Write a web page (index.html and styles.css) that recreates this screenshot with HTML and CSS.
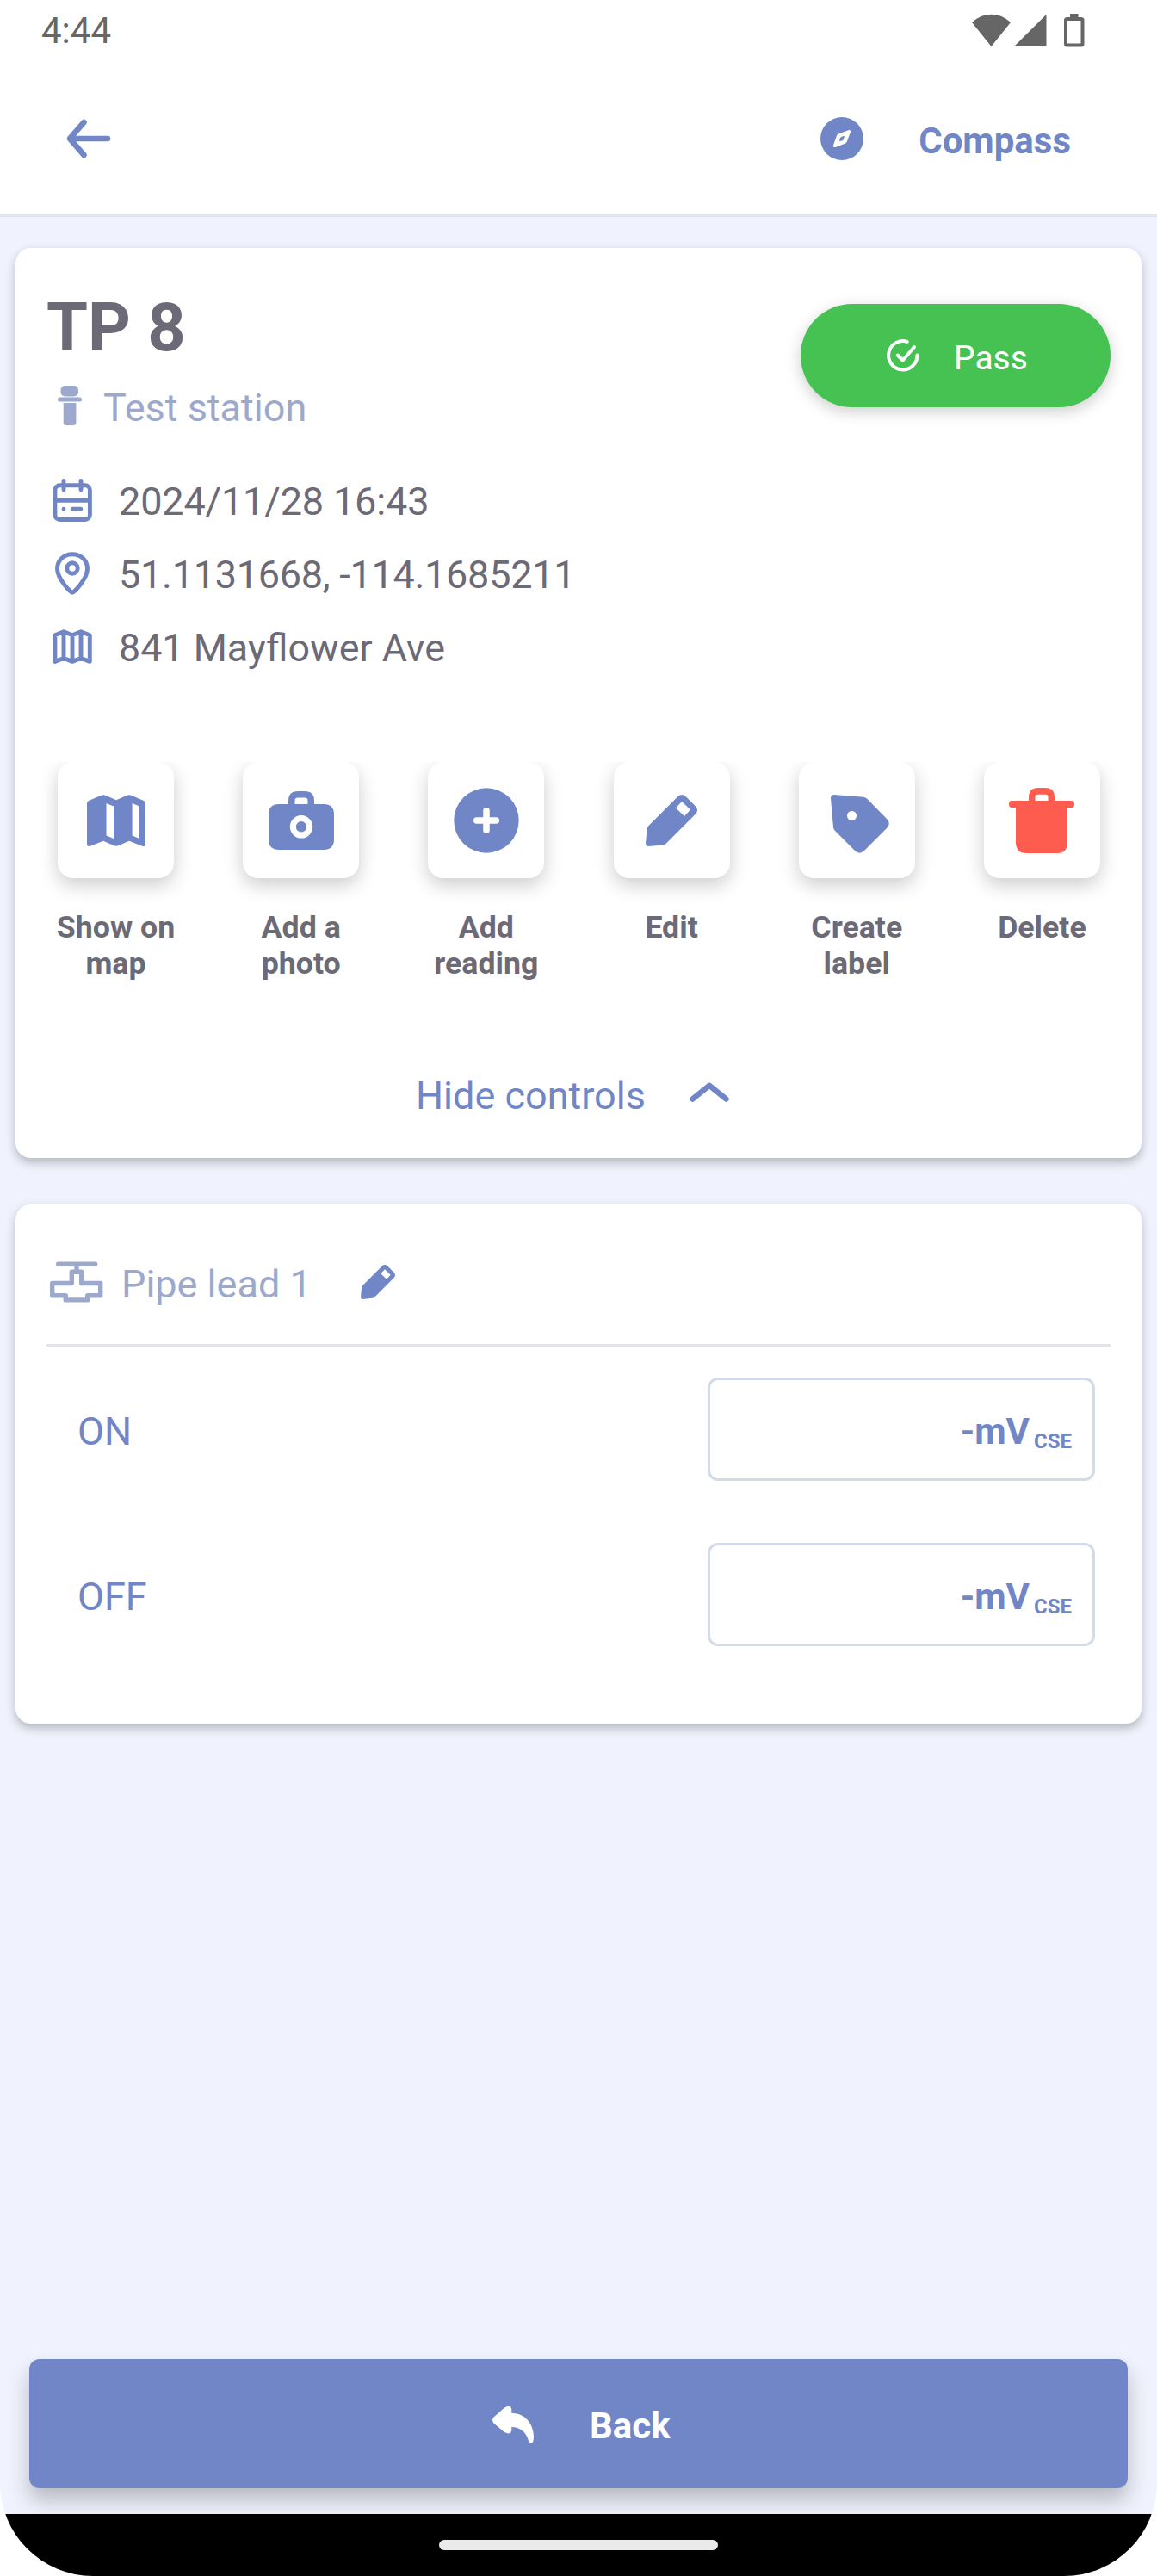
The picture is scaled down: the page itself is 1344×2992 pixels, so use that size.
FILE: index.html
```html
<!DOCTYPE html>
<html lang="en">
<head>
<meta charset="utf-8">
<title>TP 8</title>
<link rel="stylesheet" href="styles.css">
</head>
<body>
<div class="screen">
  <div class="status">
    <span>4:44</span>
    <div class="status-icons">
      <svg width="45" height="38" viewBox="0 0 45 38"><path d="M0 10Q10 .7 22.5.7T45 10L22.5 38Z"/></svg>
      <svg class="signal" width="38" height="38" viewBox="0 0 38 38"><path d="M0 38L37.5.7V38Z"/></svg>
      <svg class="battery" width="24" height="39" viewBox="0 0 24 39"><path fill-rule="evenodd" d="M7 0h9.5v4H20q3.500 0 3.500 3.500V35q0 3.500-3.500 3.500H3.500Q0 38.500 0 35V7.500Q0 4 3.500 4H7ZM4 8V34.500H19.500V8Z"/></svg>
    </div>
  </div>

  <header class="topbar">
    <svg class="line" width="52" height="46" viewBox="0 0 52 46" stroke-width="6.500"><path d="M20.500 4L4 23L20.500 42M5 23H48"/></svg>
    <div class="compass">
      <svg width="50" height="50" viewBox="0 0 50 50"><circle cx="25" cy="25" r="25"/><path fill="#fff" d="M21.500 19.200L32.500 15.200Q35.800 14.500 35 17.500L30.800 28.500Q30 30.300 28.500 30.800L17.500 35Q14.200 35.500 15 32.500L19 21.500Q19.700 19.800 21.500 19.200Z"/><path d="M22 28L23 24Q25 22 28 22L27 25.800Q26 28 22 28Z"/></svg>
      <span>Compass</span>
    </div>
  </header>

  <main>
    <section class="card point">
      <div class="point-head">
        <div>
          <h1>TP 8</h1>
          <div class="kind">
            <svg width="60" height="48" viewBox="0 0 60 48"><rect x="16.500" y="1" width="20.500" height="12.500" rx="5"/><rect x="13" y="14.500" width="28" height="5" rx="2.500"/><path d="M19.700 21H34.400V43.500Q34.400 47 31 47H23Q19.700 47 19.700 43.500Z"/></svg>
            <span>Test station</span>
          </div>
        </div>
        <div class="pass">
          <svg class="line" width="38" height="38" viewBox="0 0 38 38" stroke-width="4"><path d="M23.800 2.800A16.700 16.700 0 1 0 35.500 18.500M12.700 18.500L18.700 24.500L32 9"/></svg>
          <span>Pass</span>
        </div>
      </div>

      <div class="meta">
        <div class="meta-row">
          <svg class="line" width="60" height="52" viewBox="0 0 60 52" stroke-width="4.900"><rect x="9.900" y="8.800" width="40.500" height="39.700" rx="5.500"/><path d="M10 26.200H50M20 3.500V13.700M40 3.500V13.700M30.200 36.200H39.800M20 36.200V36.210"/></svg>
          <span class="date">2024/11/28 16:43</span>
        </div>
        <div class="meta-row">
          <svg class="line" width="60" height="52" viewBox="0 0 60 52" stroke-width="4.900"><path d="M30 48.300C28 48.300 12.500 32 12.500 20.800C12.500 11 20 3.700 30 3.700S47.500 11 47.500 20.800C47.500 32 32 48.300 30 48.300Z"/><circle cx="30" cy="20" r="6.200"/></svg>
          <span class="coords">51.1131668, -114.1685211</span>
        </div>
        <div class="meta-row">
          <svg class="line" width="60" height="52" viewBox="0 0 60 52" stroke-width="4.900"><path d="M9.900 12.800L20 8.700L30 12.800L40 8.700L50.300 12.800V43.400L40 39.500L30 43.400L20 39.500L9.900 43.400ZM20 9V39M30 13V43M40 9V39"/></svg>
          <span class="address">841 Mayflower Ave</span>
        </div>
      </div>

      <div class="actions">
        <div class="action">
          <div class="tile"><svg width="68" height="60" viewBox="0 0 68 60"><path fill-rule="evenodd" d="M2 7L16 1Q19 -.5 22 1L34 6.300L46 1Q49 -.5 52 1L66 7Q68 8 68 10V56.500Q68 61.500 63.500 59.500L49 53.700L37 59Q34 60.500 31 59L19 53.700L4.500 59.500Q0 61.500 0 56.500V10Q0 8 2 7ZM22.500 10V47.500L31 51V13.500ZM52.600 10V47.500L61 51V13.500Z"/></svg></div>
          <span>Show on map</span>
        </div>
        <div class="action">
          <div class="tile"><svg width="76" height="68" viewBox="0 0 76 68"><path fill-rule="evenodd" d="M23 15V11Q23 0 34 0H42Q53 0 53 11V15H64Q76 15 76 27V56Q76 68 64 68H12Q0 68 0 56V27Q0 15 12 15ZM30.500 15H45.500V11Q45.500 7.500 42.500 7.500H33.500Q30.500 7.500 30.500 11Z"/><circle cx="38" cy="41.300" r="9.700" fill="none" stroke="#fff" stroke-width="7"/></svg></div>
          <span>Add a photo</span>
        </div>
        <div class="action">
          <div class="tile"><svg width="76" height="76" viewBox="0 0 76 76"><circle cx="38" cy="38" r="37.700"/><path d="M26.700 38H49.300M38 26.700V49.300" stroke="#fff" stroke-width="7.500" stroke-linecap="round"/></svg></div>
          <span>Add reading</span>
        </div>
        <div class="action">
          <div class="tile"><svg width="60" height="60" viewBox="0 0 60 60"><path fill-rule="evenodd" d="M3.500 36L37.500 2Q42 -2 46.500 2L58 13.500Q62 18 58 22.500L24 56.500Q22.500 58 20.500 58.300L4 60Q0 60 0 56L1.700 39.500Q2 37.500 3.500 36ZM35 15.500L42 8L52 17.500L45 25Z"/></svg></div>
          <span>Edit</span>
        </div>
        <div class="action">
          <div class="tile tag"><svg width="68" height="68" viewBox="0 0 68 68"><path fill-rule="evenodd" d="M4 0L38 2.800Q40.500 3 42.500 5L65.500 28.500Q70 33.500 65.500 38.500L38.500 65.500Q33.500 69.800 28.500 65.500L5 42Q3.200 40.200 3 38L0 4Q0 0 4 0ZM24.500 19A5.500 5.500 0 1 0 24.510 19Z"/></svg></div>
          <span>Create label</span>
        </div>
        <div class="action">
          <div class="tile danger"><svg width="76" height="76" viewBox="0 0 76 76"><path fill-rule="evenodd" d="M23 15V11Q23 0 34 0H42Q53 0 53 11V15H73Q76 15 76 19T73 23H68V63Q68 76 56 76H20Q8 76 8 63V23H3Q0 23 0 19T3 15ZM30.500 15H45.500V11Q45.500 7.700 42.500 7.700H33.500Q30.500 7.700 30.500 11Z"/></svg></div>
          <span>Delete</span>
        </div>
      </div>

      <div class="toggle">
        <span>Hide controls</span>
        <svg class="line" width="46" height="24" viewBox="0 0 46 24" stroke-width="6.500"><path d="M3.500 19.500L23 3.800L42.500 19.500"/></svg>
      </div>
    </section>

    <section class="card lead">
      <div class="lead-head">
        <svg class="line valve" width="62" height="48" viewBox="0 0 62 48" stroke-width="5.400"><path d="M9.700 3.200H52.700M31 3.200V12M25.300 12.200H36.700V25.500H58.700V39.800H43.700V44.900H18.300V39.800H2.700V25.500H25.300Z"/></svg>
        <span>Pipe lead 1</span>
        <svg class="pen" width="40" height="40" viewBox="0 0 60 60"><path fill-rule="evenodd" d="M3.500 36L37.500 2Q42 -2 46.500 2L58 13.500Q62 18 58 22.500L24 56.500Q22.500 58 20.500 58.300L4 60Q0 60 0 56L1.700 39.500Q2 37.500 3.500 36ZM35 15.500L42 8L52 17.500L45 25Z"/></svg>
      </div>
      <div class="readings">
        <div class="reading"><span>ON</span><div class="field"><b>-mV</b><small>CSE</small></div></div>
        <div class="reading"><span>OFF</span><div class="field"><b>-mV</b><small>CSE</small></div></div>
      </div>
    </section>
  </main>

  <div class="back">
    <svg width="48" height="43" viewBox="0 0 48 43"><path d="M2 12L14 1.500Q22 -3 22.300 4V7.700C38 8 48 20 48 36Q47.500 43 45 43Q42.500 43 41 37C38 29 32 24.500 22.300 24V27Q22 34 14 30L2 20Q-2 16 2 12Z"/></svg>
    <span>Back</span>
  </div>
  <div class="nav"><div class="handle"></div></div>
</div>
</body>
</html>
```
FILE: styles.css
```css
* { box-sizing: border-box; }
body { margin: 0; background: #fff; font-family: Roboto, sans-serif; color: #6b6a76; }
svg { display: block; flex: none; fill: currentColor; overflow: visible; }
svg.line { fill: none; stroke: currentColor; stroke-linecap: round; stroke-linejoin: round; }
span { white-space: nowrap; }

.screen { display: flex; flex-direction: column; width: 1344px; height: 2992px; overflow: hidden; background: #f0f3fd; border-radius: 0 0 108px 108px; }

.status { display: flex; align-items: center; justify-content: space-between; height: 72px; padding: 0 84px 0 48px; background: #fff; color: #666; font-size: 42px; line-height: 72px; }
.status-icons { display: flex; align-items: center; margin-top: -2px; }
.signal { margin-left: 4px; }
.battery { margin-left: 20px; }

.topbar { display: flex; align-items: center; justify-content: space-between; height: 180px; padding: 1px 100px 0 77px; background: #fff; border-bottom: 3px solid #e0e4f0; color: #7086c7; }
.compass { display: flex; align-items: center; gap: 64px; font-size: 42px; font-weight: 700; }
.compass span { padding-top: 5px; }

.card { margin: 0 18px; padding: 0 36px; background: #fff; border-radius: 18px; box-shadow: 0 5px 12px rgba(0, 0, 0, .26); }
.point { height: 1057px; margin-top: 36px; padding-top: 48px; }
.lead { height: 603px; margin-top: 54px; }

.point-head { display: flex; justify-content: space-between; align-items: flex-start; }
h1 { margin: 0; font-size: 77.5px; line-height: 90px; font-weight: 700; }
.kind { display: flex; align-items: center; gap: 6px; height: 52px; margin-top: 21px; color: #9ca9cd; font-size: 45px; }
.kind svg { margin-bottom: 4px; }
.pass { display: flex; align-items: center; gap: 40px; width: 360px; height: 120px; margin-top: 17px; padding-left: 100px; border-radius: 60px; background: #45c252; color: #fff; font-size: 39px; box-shadow: 0 5px 18px rgba(0, 0, 0, .2); }
.pass span { padding-top: 5px; }

.meta { margin-top: 41px; font-size: 45px; }
.meta-row { display: flex; align-items: center; gap: 24px; height: 85px; }
.meta-row svg { color: #7086c7; margin-bottom: 3px; }
.date { letter-spacing: -.15px; }
.coords { letter-spacing: -.27px; }
.address { font-size: 44.8px; }

.actions { display: flex; justify-content: space-between; margin: 90px -1px 0 0; clip-path: inset(0 -36px -36px -36px); }
.action { display: flex; flex-direction: column; align-items: center; gap: 36px; width: 161px; height: 255px; }
.action span { font-size: 35.7px; line-height: 42px; font-weight: 700; text-align: center; white-space: normal; }
.tile { display: flex; align-items: center; justify-content: center; width: 135px; height: 135px; border-radius: 18px; background: #fff; color: #7086c7; box-shadow: 0 8px 22px rgba(0, 0, 0, .2); }
.tag { padding: 8px 0 0 8px; }
.danger { color: #ff5c50; }

.toggle { display: flex; align-items: center; gap: 51px; height: 60px; margin-top: 102px; padding-left: 429px; color: #7086c7; font-size: 45px; }
.toggle svg { margin-bottom: 7px; }

.lead-head { display: flex; align-items: center; height: 165px; padding: 23px 0 0 4px; border-bottom: 3px solid #e0e4f0; color: #9ca9cd; font-size: 45px; }
.valve { margin: 0 21px 5px 0; }
.pen { margin: 0 0 6px 57px; color: #7086c7; }
.readings { display: flex; flex-direction: column; gap: 72px; padding: 36px 18px 0 36px; color: #7086c7; }
.reading { display: flex; align-items: center; justify-content: space-between; font-size: 45px; }
.reading > span { padding-top: 5px; }
.field { display: flex; align-items: baseline; justify-content: flex-end; gap: 5px; width: 450px; height: 120px; padding: 35px 24px 0 0; border: 3px solid #d3daea; border-radius: 12px; font-size: 42px; line-height: 49px; }
.field small { position: relative; top: 5px; font-size: 24px; line-height: 30px; font-weight: 700; }

.back { display: flex; align-items: center; height: 150px; margin: auto 34px 30px; padding-left: 538px; gap: 65px; border-radius: 12px; background: #7086c7; color: #fff; font-size: 42px; font-weight: 700; box-shadow: 0 14px 24px rgba(0, 0, 0, .24); }
.back span { padding-top: 5px; }
.back svg { margin-top: 3px; }
.nav { display: flex; justify-content: center; flex: none; height: 72px; padding-top: 30px; background: #000; }
.handle { width: 324px; height: 12px; border-radius: 6px; background: #eaeaea; }
```
